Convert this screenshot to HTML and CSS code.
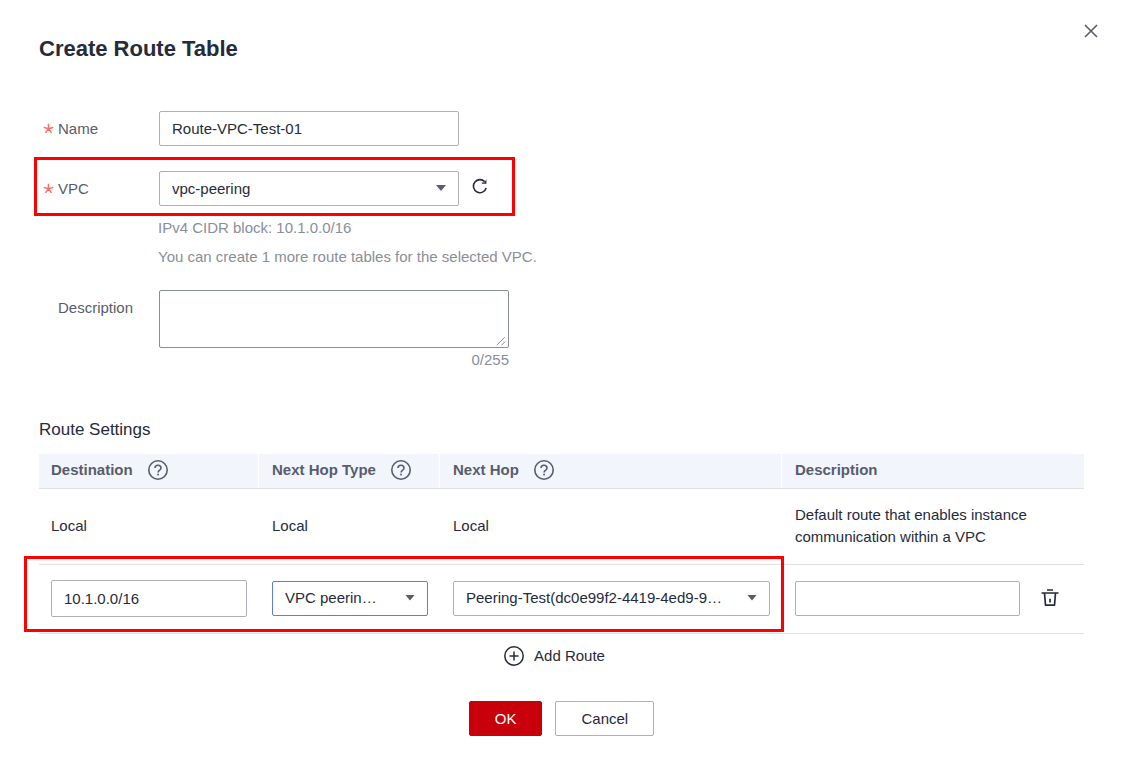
FILE: index.html
```html
<!DOCTYPE html>
<html lang="en">
<head>
<meta charset="utf-8">
<meta name="viewport" content="width=device-width, initial-scale=1">
<title>Create Route Table</title>
<link rel="stylesheet" href="styles.css">
</head>
<body>
<svg class="sprite" aria-hidden="true">
  <symbol id="icon-help" viewBox="0 0 20 20">
    <circle cx="10" cy="10" r="9.2" fill="none" stroke="currentColor" stroke-width="1.6"/>
    <path d="M7 8.1C7 6.2 8.2 5.2 10 5.2s3 1 3 2.7c0 1.2-.7 1.8-1.6 2.500-.9.700-1.300 1.100-1.300 2.200" fill="none" stroke="currentColor" stroke-width="1.600"/>
    <rect x="9.200" y="13.700" width="1.700" height="1.700" fill="currentColor"/>
  </symbol>
  <symbol id="icon-star" viewBox="0 0 12 12">
    <path d="M6 6.300V.8M6 6.300L.8 4.800M6 6.300l5.200-1.500M6 6.300l-3.300 4.500M6 6.300l3.300 4.500" fill="none" stroke="currentColor" stroke-width="1.600"/>
  </symbol>
</svg>
<form class="dialog">
  <header class="dialog-header">
    <h1 class="title">Create Route Table</h1>
    <button class="icon-button close" type="button" aria-label="Close">
      <svg width="14" height="14" viewBox="0 0 14 14"><path d="M1 1l12 12M13 1L1 13" fill="none" stroke="#575d6c" stroke-width="1.600"/></svg>
    </button>
  </header>

  <section class="fields">
    <div class="field">
      <label class="label" for="name"><svg class="star"><use href="#icon-star"/></svg>Name</label>
      <input class="control wide" id="name" type="text" value="Route-VPC-Test-01">
    </div>
    <div class="field marked">
      <label class="label" for="vpc"><svg class="star"><use href="#icon-star"/></svg>VPC</label>
      <div class="select wide">
        <select class="control" id="vpc"><option>vpc-peering</option></select>
      </div>
      <button class="icon-button refresh" type="button" aria-label="Refresh">
        <svg width="16" height="16" viewBox="0 0 16 16"><path d="M14.200 10A6.500 6.500 0 1 1 12.700 3.700" fill="none" stroke="#252b3a" stroke-width="1.600"/><path d="M14.400 1.200v4.600H9.800V4.400h2.600z" fill="#252b3a"/></svg>
      </button>
    </div>
    <div class="hints">
      <p class="hint">IPv4 CIDR block: 10.1.0.0/16</p>
      <p class="hint">You can create 1 more route tables for the selected VPC.</p>
    </div>
    <div class="field field-top">
      <label class="label" for="description"><span class="star"></span>Description</label>
      <div class="area">
        <textarea class="control textarea" id="description"></textarea>
        <svg class="grip" width="10" height="10" viewBox="0 0 10 10"><path d="M.8 9.200L8.800 1.200M5.500 9.200L9.200 5.500" fill="none" stroke="#8a8e99" stroke-width="1"/></svg>
        <p class="counter">0/255</p>
      </div>
    </div>
  </section>

  <h2 class="subtitle">Route Settings</h2>
  <table class="routes">
    <colgroup><col class="col-destination"><col class="col-type"><col class="col-hop"><col></colgroup>
    <thead>
      <tr>
        <th scope="col"><span class="heading">Destination<svg class="help"><use href="#icon-help"/></svg></span></th>
        <th scope="col"><span class="heading">Next Hop Type<svg class="help"><use href="#icon-help"/></svg></span></th>
        <th scope="col"><span class="heading">Next Hop<svg class="help"><use href="#icon-help"/></svg></span></th>
        <th scope="col"><span class="heading">Description</span></th>
      </tr>
    </thead>
    <tbody>
      <tr class="row-local">
        <td>Local</td>
        <td>Local</td>
        <td>Local</td>
        <td>Default route that enables instance communication within a VPC</td>
      </tr>
      <tr class="row-edit">
        <td class="marked-cell"><input class="control tall" type="text" value="10.1.0.0/16" aria-label="Destination"></td>
        <td><div class="select"><select class="control focused" aria-label="Next Hop Type"><option>VPC peerin…</option></select></div></td>
        <td><div class="select"><select class="control" aria-label="Next Hop"><option>Peering-Test(dc0e99f2-4419-4ed9-9…</option></select></div></td>
        <td>
          <div class="last">
            <input class="control" type="text" aria-label="Route description">
            <button class="icon-button" type="button" aria-label="Delete route">
              <svg width="18" height="18" viewBox="0 0 18 18"><path d="M6 1h6M.5 4h17" fill="none" stroke="#252b3a" stroke-width="1.700"/><path d="M3.500 4l1 12.200h9l1-12.200" fill="none" stroke="#252b3a" stroke-width="1.700" stroke-linejoin="round"/><path d="M9 9.800v3.800" stroke="#252b3a" stroke-width="1.700"/></svg>
            </button>
          </div>
        </td>
      </tr>
    </tbody>
  </table>

  <button class="add" type="button">
    <svg width="20" height="20" viewBox="0 0 20 20"><circle cx="10" cy="10" r="9.200" fill="none" stroke="#252b3a" stroke-width="1.500"/><path d="M10 5.500v9M5.500 10h9" stroke="#252b3a" stroke-width="1.500"/></svg>
    Add Route
  </button>

  <footer class="actions">
    <button class="button primary" type="submit">OK</button>
    <button class="button secondary" type="button">Cancel</button>
  </footer>
</form>
</body>
</html>
```

FILE: styles.css
```css
*,
*::after {
  box-sizing: border-box;
}

body {
  margin: 0;
  background: #fff;
  color: #252b3a;
  font: 15px/22px "Liberation Sans", Arial, sans-serif;
}

h1,
h2,
p {
  margin: 0;
}

button,
input,
select,
textarea {
  font: inherit;
  color: inherit;
}

svg {
  display: block;
}

.sprite {
  position: absolute;
  width: 0;
  height: 0;
}

.dialog {
  padding: 24px 37px 40px 39px;
}

.dialog-header {
  display: flex;
  justify-content: space-between;
  align-items: flex-start;
  margin-right: -14px;
  height: 87px;
}

.title {
  padding-top: 11px;
  font-size: 22px;
  line-height: 28px;
}

.icon-button {
  flex: none;
  padding: 0;
  border: 0;
  background: none;
  cursor: pointer;
}

.fields {
  display: flex;
  flex-direction: column;
}

.field {
  display: flex;
  align-items: center;
}

.marked {
  position: relative;
  width: 420px;
  margin-top: 25px;
}

.marked::after,
.marked-cell::after {
  content: "";
  position: absolute;
  border: 3px solid #f00;
  pointer-events: none;
}

.marked::after {
  inset: -14px -56px -10px -5px;
}

.field-top {
  align-items: flex-start;
  margin-top: 19px;
}

.field-top .label {
  padding-top: 7px;
}

.label {
  display: flex;
  flex: none;
  align-items: center;
  gap: 4px;
  width: 120px;
  padding-left: 4px;
  color: #575d6c;
}

.star {
  width: 11px;
  height: 11px;
  color: #f66f6a;
}

.control {
  display: block;
  width: 100%;
  height: 35px;
  padding: 0 12px;
  border: 1px solid #adb0b8;
  border-radius: 2px;
  background: #fff;
  outline: 0;
}

.tall {
  height: 37px;
}

.wide {
  flex: none;
  width: 300px;
}

.focused {
  border-color: #5e7ce0;
}

.select {
  position: relative;
}

.select .control {
  appearance: none;
}

.select::after {
  content: "";
  position: absolute;
  top: 14px;
  right: 13px;
  width: 10px;
  height: 6px;
  background: #575d6c;
  clip-path: polygon(0 0, 100% 0, 50% 100%);
  pointer-events: none;
}

.refresh {
  margin: 0 0 6px 13px;
}

.hints {
  padding: 7px 0 0 119px;
  color: #8a8e99;
}

.hint {
  line-height: 29px;
}

.area {
  position: relative;
  width: 350px;
}

.textarea {
  height: 58px;
  border-color: #8a8e99;
  resize: none;
}

.grip {
  position: absolute;
  top: 46px;
  right: 3px;
}

.counter {
  padding-top: 1px;
  color: #8a8e99;
  text-align: right;
}

.subtitle {
  margin: 47px 0 12px;
  font-size: 17px;
  font-weight: normal;
  line-height: 24px;
}

.routes {
  width: 100%;
  border-collapse: separate;
  border-spacing: 0;
  table-layout: fixed;
}

.col-destination {
  width: 220px;
}

.col-type {
  width: 181px;
}

.col-hop {
  width: 342px;
}

.routes th,
.routes td {
  padding: 0 12px 2px 13px;
  border-bottom: 1px solid #dfe1e6;
  text-align: left;
}

.routes th:first-child,
.routes td:first-child {
  padding-left: 12px;
}

.routes th {
  height: 35px;
  background: linear-gradient(#fff, #fff) right / 1px 100% no-repeat #f2f5fc;
  color: #575d6c;
}

.routes th:last-child {
  background: #f2f5fc;
}

.heading {
  display: flex;
  align-items: center;
  gap: 15px;
}

.help {
  width: 20px;
  height: 20px;
}

.row-local td {
  height: 76px;
}

.row-local td:last-child {
  padding-right: 40px;
}

.row-edit td {
  height: 69px;
}

.marked-cell {
  position: relative;
}

.marked-cell::after {
  top: -9px;
  bottom: 1px;
  left: -15px;
  width: 760px;
}

.last {
  display: flex;
  align-items: center;
  gap: 21px;
  padding-right: 13px;
}

.add {
  display: flex;
  align-items: center;
  gap: 10px;
  margin: 11px auto 0;
  padding: 0 14px 0 0;
  border: 0;
  background: none;
  cursor: pointer;
}

.actions {
  display: flex;
  justify-content: center;
  gap: 13px;
  margin-top: 34px;
}

.button {
  height: 35px;
  padding: 0 25px;
  border: 1px solid #adb0b8;
  border-radius: 2px;
  background: #fff;
  cursor: pointer;
}

.primary {
  border-color: #c7000b;
  background: #c7000b;
  color: #fff;
}
```
